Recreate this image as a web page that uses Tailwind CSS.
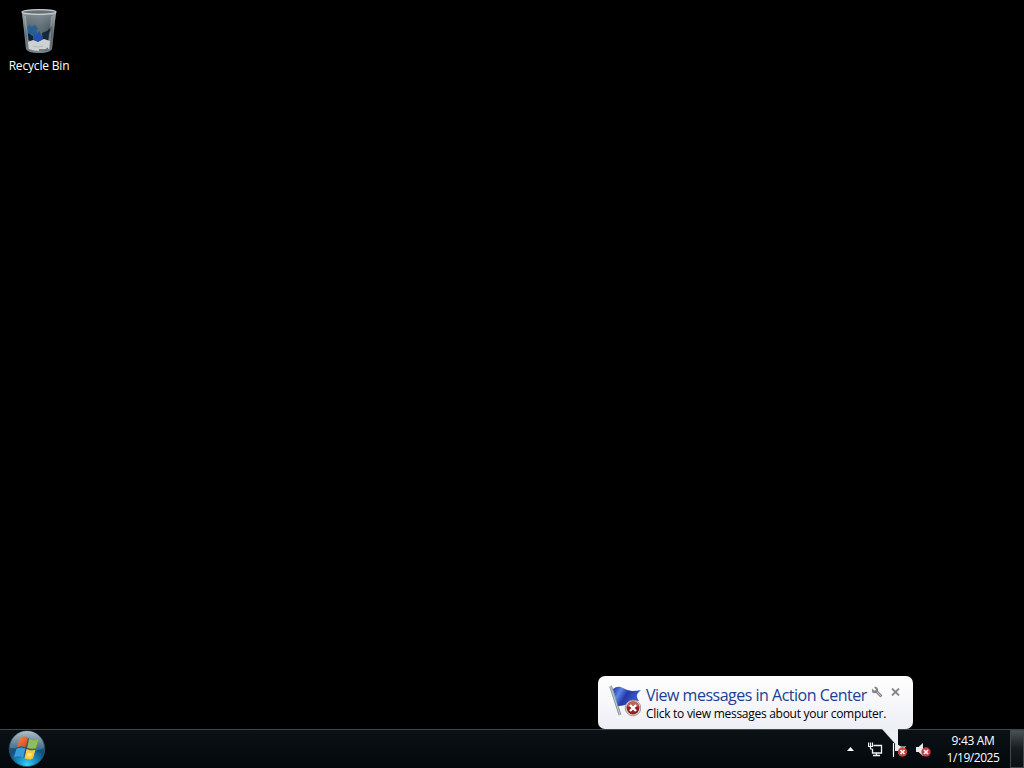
<!DOCTYPE html>
<html lang="en">
<head>
    <meta charset="UTF-8">
    <meta name="viewport" content="width=device-width, initial-scale=1.0">
    <title>Desktop</title>
    <script src="https://cdn.jsdelivr.net/npm/@tailwindcss/browser@4"></script>
</head>
<body class="flex flex-col h-screen overflow-hidden bg-black font-['Open_Sans','Noto_Sans',sans-serif] text-xs text-white">
    <!-- Desktop -->
    <main class="grow">
        <div class="flex flex-col items-center w-[78px] pt-2">
            <svg class="w-10 h-[46px]" viewBox="0 0 40 46">
                <defs>
                    <linearGradient id="bin" x1="0" x2="1">
                        <stop offset="0" stop-color="#9aa4a9"/>
                        <stop offset=".15" stop-color="#46545b"/>
                        <stop offset=".55" stop-color="#52626b"/>
                        <stop offset=".85" stop-color="#3c474d"/>
                        <stop offset="1" stop-color="#a5aeb2"/>
                    </linearGradient>
                    <linearGradient id="binFade" x1="0" y1="0" x2="0" y2="1">
                        <stop offset="0" stop-color="#aab4b8" stop-opacity=".6"/>
                        <stop offset=".5" stop-color="#7d8b92" stop-opacity=".2"/>
                        <stop offset="1" stop-color="#c3cbce" stop-opacity=".4"/>
                    </linearGradient>
                </defs>
                <path d="M3 4L7 41Q9 45 20 45T33 41L37 4Z" fill="url(#bin)"/>
                <path d="M3 4L7 41Q9 45 20 45T33 41L37 4Z" fill="url(#binFade)"/>
                <path d="M8 19l3-2 1 2 4-2 3 4-2 2 2 3-4 2-3-2-5 3z" fill="#285f92"/>
                <path d="M9 25l5 3 1 6-6-2z" fill="#112233"/>
                <path d="M15 27l3-1 2-3 3 5 2 4-4 3-4-1-3-3z" fill="#2450ad"/>
                <path d="M23 25l5-2 5-5-1 5-2 2-1 8-5-1z" fill="#142838"/>
                <path d="M9 34l5-2 5 2 6-3 6 2-1 8q-10 4-20 0z" fill="#cdd2d3"/>
                <path d="M14 38l5 1 5-1" fill="none" stroke="#b0b8bb"/>
                <path d="M20 42h7l2-2" fill="none" stroke="#5c666a" stroke-width="1.5"/>
                <path d="M6 8L10 41M33 8L30 41" stroke="#d5dcdf" stroke-opacity=".35" stroke-width="1.5"/>
                <ellipse cx="20" cy="4" rx="17" ry="2.4" fill="#667176" stroke="#c9cfd1" stroke-width="1.3"/>
            </svg>
            <span class="mt-1 leading-4 tracking-[-0.18px]">Recycle Bin</span>
        </div>
    </main>

    <!-- Taskbar -->
    <footer class="relative flex items-center h-[39px] border-t border-[#3e484c] bg-linear-to-b from-[#0b1115] to-[#03080b]">
        <svg class="ml-2 w-[38px] h-[38px]" viewBox="0 0 38 38">
            <defs>
                <radialGradient id="orb" cx=".5" cy=".95" r=".9">
                    <stop offset="0" stop-color="#38d5f4"/>
                    <stop offset=".3" stop-color="#178cc8"/>
                    <stop offset=".6" stop-color="#12507f"/>
                    <stop offset="1" stop-color="#46637a"/>
                </radialGradient>
                <linearGradient id="shine" x1="0" y1="0" x2="0" y2="1">
                    <stop offset="0" stop-color="#cbd7dc" stop-opacity=".8"/>
                    <stop offset="1" stop-color="#8199a6" stop-opacity=".35"/>
                </linearGradient>
                <linearGradient id="red" x1="0" y1="0" x2="1" y2="1">
                    <stop offset="0" stop-color="#f08a4e"/>
                    <stop offset="1" stop-color="#cf4319"/>
                </linearGradient>
            </defs>
            <circle cx="19" cy="18.8" r="17.8" fill="url(#orb)" stroke="#285266"/>
            <path d="M2 18A17 17 0 0 1 36 18Q28 22 19 20T2 18Z" fill="url(#shine)"/>
            <path d="M11.5 8.500q4-3.500 9-.5l-2.500 9.500q-4-2.500-9 0z" fill="url(#red)"/>
            <path d="M21.500 9q4 2.500 9 0l-2.500 9.500q-4.500 2-9-.5z" fill="#8fbd59"/>
            <path d="M8.500 18.500q4.500-2.500 9 0l-2.500 9q-4-2.500-9 0z" fill="#3c9bd8"/>
            <path d="M18.500 19q4 2.500 9 .5l-2.500 9q-4 2-9-.5z" fill="#fcc83c"/>
            <path d="M19 23l5 0-1 4-4-1z" fill="#ffe37c"/>
            <path d="M20.500 8L16 28M8 18q5-2 10 0t10 1" fill="none" stroke="#26384a" stroke-opacity=".7"/>
        </svg>

        <div class="flex items-center ml-auto h-full">
            <svg class="w-[7px] h-1" viewBox="0 0 7 4"><path d="M0 4L3.5 0 7 4Z" fill="#fff"/></svg>
            <svg class="ml-[14px] mt-px w-4 h-4" viewBox="0 0 16 16" fill="none" stroke="#f1f3f3">
                <path d="M5.5 3.5h8V11h-9V7" stroke-width="1.3"/>
                <path d="M5 13.5h7M8.5 11v2.500" stroke-width="1.3"/>
                <path d="M.5.5v4h4v-4M2.500.5v4M2.500 4.500V7h2" stroke-width="1.2"/>
            </svg>
            <svg class="ml-2 mt-px w-4 h-4" viewBox="0 0 16 16">
                <path d="M1.5 1v14" stroke="#fff" stroke-width="1.2"/>
                <path d="M3 2q3 0 5 2 3 1 6 0l-2 3 1 2H3z" fill="#e8ebeb"/>
                <circle cx="10.5" cy="10" r="4.700" fill="#c9413b"/>
                <path d="M8.500 8l4 4M12.500 8l-4 4" stroke="#fff" stroke-width="1.6"/>
            </svg>
            <svg class="ml-2 mt-px w-4 h-4" viewBox="0 0 16 16">
                <path d="M0 5h2.500L7 1v13l-4.500-4H0z" fill="#e6eaeb"/>
                <circle cx="10" cy="10" r="4.700" fill="#c63d47"/>
                <path d="M8 8l4 4M12 8l-4 4" stroke="#fff" stroke-width="1.6"/>
            </svg>
            <div class="flex flex-col items-center ml-3 w-[58px] text-center leading-[17px] whitespace-nowrap">
                <span class="tracking-[-0.35px]">9:43 AM</span>
                <span class="tracking-[-0.45px]">1/19/2025</span>
            </div>
            <div class="ml-2 w-[14px] h-full border border-[#41484b] bg-linear-to-b from-[#495154] via-[#151b1e] to-[#0b1012]"></div>
        </div>
    </footer>

    <!-- Action Center balloon -->
    <div class="absolute left-[598px] top-[676px] flex w-[315px] h-[53px] rounded-[7px] bg-linear-to-b from-white to-[#eeeff5] pl-[11px] pt-[9px] text-black">
        <svg class="w-8 h-8 shrink-0" viewBox="0 0 32 32">
            <defs>
                <linearGradient id="flag" x1="0" x2="1" y2=".4">
                    <stop offset="0" stop-color="#1c2d9c"/>
                    <stop offset=".3" stop-color="#5a86e5"/>
                    <stop offset=".55" stop-color="#2537ab"/>
                    <stop offset="1" stop-color="#3d62cf"/>
                </linearGradient>
            </defs>
            <path d="M1.5 1L11 30" stroke="#85969f" stroke-width="2.8"/>
            <path d="M1.5 1L11 30" stroke="#d1dadf" stroke-width=".8"/>
            <path d="M4 4q5-4 10-1t9 3q5 0 9-1-5 4-4 7 1 3 2 4-6-1-10 2t-11 3z" fill="url(#flag)"/>
            <circle cx="24" cy="23" r="7.8" fill="#e2d3d4" stroke="#a98f91" stroke-width=".9"/>
            <circle cx="24" cy="23" r="6.4" fill="#8f2222"/>
            <path d="M18 21a6.2 6.2 0 0 1 12 0q-6 3-12 0z" fill="#bd645e"/>
            <path d="M21 20l6 6M27 20l-6 6" stroke="#fff" stroke-width="2.3"/>
        </svg>
        <div class="ml-[5px] w-[222px] whitespace-nowrap">
            <h1 class="text-base leading-5 tracking-[-0.5px] text-[#203f93]">View messages in Action Center</h1>
            <p class="leading-[17px] tracking-[-0.28px]">Click to view messages about your computer.</p>
        </div>
        <svg class="ml-[3px] mt-px w-3 h-3" viewBox="0 0 12 12">
            <path d="M4.5 4.500l6 6" stroke="#858589" stroke-width="2.8"/>
            <path d="M1 2.500l2 2h1.500L5 3.500 3 1q3-1 4 2T4.500 7 1 5z" fill="#858589"/>
            <path d="M6 6l4 4" stroke="#d8d8dd" stroke-width=".7"/>
        </svg>
        <svg class="ml-2 mt-[3px] w-[9px] h-2" viewBox="0 0 9 8"><path d="M1 .5l7 7M8 .5l-7 7" stroke="#858589" stroke-width="1.8"/></svg>
        <svg class="absolute left-[284px] top-[53px] w-4 h-[18px]" viewBox="0 0 16 18"><path d="M0 0h16v18z" fill="#eeeff5"/></svg>
    </div>
</body>
</html>
